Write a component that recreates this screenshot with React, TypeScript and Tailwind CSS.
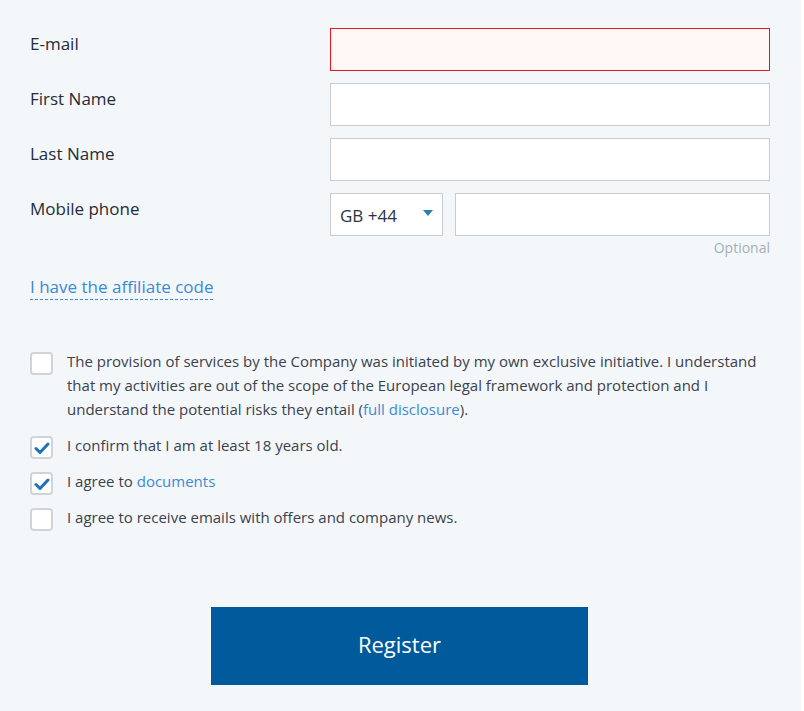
import React from "react";

const font = { fontFamily: '"Open Sans", "Noto Sans", sans-serif' };

function Check() {
  return (
    <svg width="16" height="14" viewBox="0 0 16 14" className="block">
      <path d="M2 7.5 L6 11.5 L14 3" fill="none" stroke="#1d71b8" strokeWidth="3" strokeLinecap="round" strokeLinejoin="round" />
    </svg>
  );
}

function Box({ checked }: { checked?: boolean }) {
  return (
    <div className="pt-[3px] -mb-[2px] shrink-0">
      <div className="w-[23px] h-[23px] rounded-[4px] border-2 border-[#cfd4da] bg-white flex items-center justify-center">
        {checked && <Check />}
      </div>
    </div>
  );
}

function Row({ label, children }: { label: string; children: React.ReactNode }) {
  return (
    <div className="flex">
      <div className="w-[300px] pt-[5px] text-[17px] leading-[22px] font-medium text-[#252c36]">{label}</div>
      <div className="w-[440px]">{children}</div>
    </div>
  );
}

export default function App() {
  return (
    <div className="w-[804px] h-[711px] bg-white" style={font}>
      <div className="w-[801px] h-[711px] bg-[#f4f7fa] pl-[30px] pt-[28px]">
        <div className="flex flex-col gap-[12px]">
          <Row label="E-mail">
            <div className="h-[43px] border border-[#e8161f] bg-[#fff6f6]" />
          </Row>
          <Row label="First Name">
            <div className="h-[43px] border border-[#c8cdd2] bg-white" />
          </Row>
          <Row label="Last Name">
            <div className="h-[43px] border border-[#c8cdd2] bg-white" />
          </Row>
          <Row label="Mobile phone">
            <div className="flex gap-[12px]">
              <div className="w-[113px] h-[43px] border border-[#c8cdd2] bg-white flex items-center justify-between pl-[9px] pr-[9px]">
                <span className="text-[17px] text-[#2c3440] pt-[2px]">GB +44</span>
                <svg width="10" height="6" viewBox="0 0 10 6" className="mb-[3px]">
                  <path d="M0 0 H10 L5 6 Z" fill="#2b7fb6" />
                </svg>
              </div>
              <div className="flex-1 h-[43px] border border-[#c8cdd2] bg-white" />
            </div>
            <div className="text-right text-[14px] leading-[20px] text-[#a6b0ba] pt-[2px]">Optional</div>
          </Row>
        </div>

        <div className="mt-[17px]">
          <span className="inline-block text-[17px] leading-[22px] text-[#3a8ad6] border-b border-dashed border-[#3a8ad6] pb-[1px]">
            I have the affiliate code
          </span>
        </div>

        <div className="mt-[49px] w-[740px] flex flex-col gap-[12px] text-[15px] leading-[24px] text-[#3a424c]">
          <div className="flex gap-[14px]">
            <Box />
            <p>
              The provision of services by the Company was initiated by my own exclusive initiative. I understand that my activities are out of the scope of the European legal framework and protection and I understand the potential risks they entail (<span className="text-[#3a8ad6]">full disclosure</span>).
            </p>
          </div>
          <div className="flex gap-[14px]">
            <Box checked />
            <p>I confirm that I am at least 18 years old.</p>
          </div>
          <div className="flex gap-[14px]">
            <Box checked />
            <p>I agree to <span className="text-[#3a8ad6]">documents</span></p>
          </div>
          <div className="flex gap-[14px]">
            <Box />
            <p>I agree to receive emails with offers and company news.</p>
          </div>
        </div>

        <div className="mt-[78px] pl-[181px]">
          <button className="w-[377px] h-[78px] bg-[#005a9b] text-white text-[22px] pb-[4px]">Register</button>
        </div>
      </div>
    </div>
  );
}
